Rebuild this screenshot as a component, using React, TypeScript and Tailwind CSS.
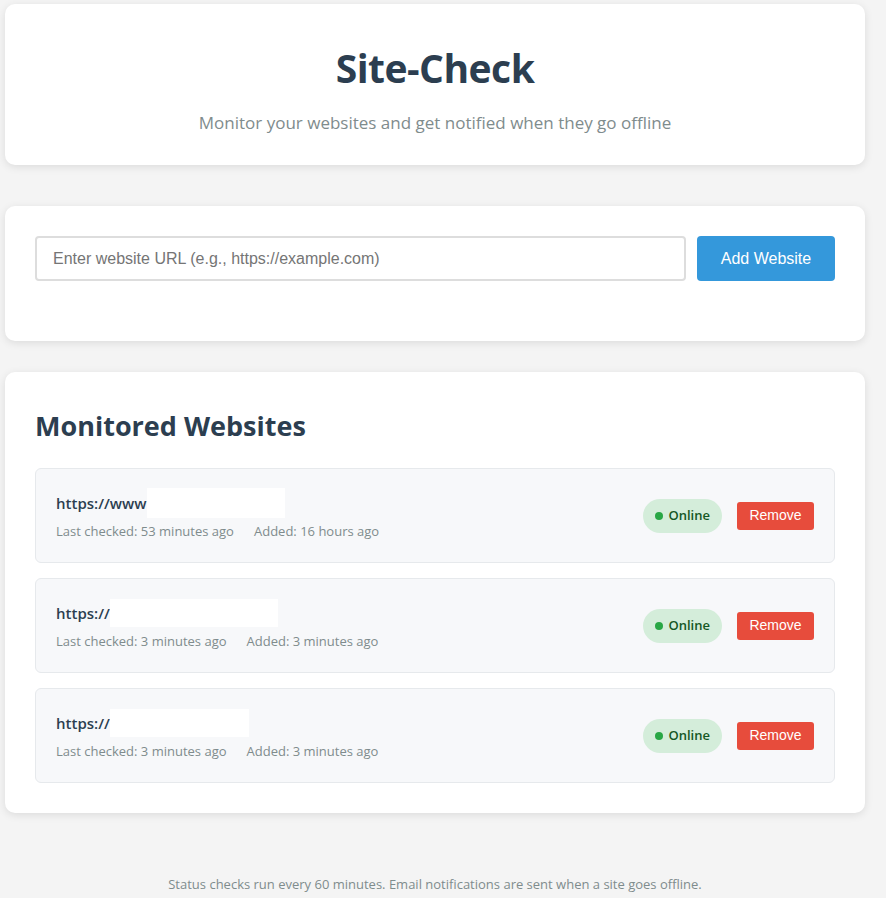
const sites = [
  { prefix: "https://www", hide: "w-[138px] h-[30px]", checked: "53 minutes ago", added: "16 hours ago" },
  { prefix: "https://", hide: "w-[168px] h-[28px]", checked: "3 minutes ago", added: "3 minutes ago" },
  { prefix: "https://", hide: "w-[139px] h-[28px]", checked: "3 minutes ago", added: "3 minutes ago" },
];

const App = () => {
  return (
    <div className="min-h-[898px] bg-[#f4f4f4] pl-[5px] pr-[21px] pt-[4px] font-['Open_Sans','Noto_Sans',sans-serif] text-[#2c3e50]">
      {/* header card */}
      <header className="bg-white rounded-[10px] shadow-[0_2px_8px_rgba(0,0,0,0.1)] h-[161px] flex flex-col items-center pt-[40px]">
        <h1 className="text-[39px] font-bold leading-[48px] tracking-[-0.5px]">Site-Check</h1>
        <p className="mt-[19px] text-[17px] text-[#7f8c8d] leading-[24px]">
          Monitor your websites and get notified when they go offline
        </p>
      </header>

      {/* add form */}
      <section className="mt-[41px] bg-white rounded-[10px] shadow-[0_2px_8px_rgba(0,0,0,0.1)] p-[30px] pb-[60px]">
        <div className="flex gap-[11px]">
          <input
            placeholder="Enter website URL (e.g., https://example.com)"
            className="flex-1 h-[45px] border-2 border-[#dddddd] rounded-[4px] px-[16px] text-[16px] font-['Liberation_Sans',Arial,sans-serif] placeholder:text-[#757575] outline-none"
          />
          <button className="w-[138px] h-[45px] bg-[#3498db] text-white rounded-[4px] text-[16px] font-['Liberation_Sans',Arial,sans-serif]">
            Add Website
          </button>
        </div>
      </section>

      {/* monitored list */}
      <section className="mt-[31px] bg-white rounded-[10px] shadow-[0_2px_8px_rgba(0,0,0,0.1)] px-[30px] pt-[36px] pb-[30px]">
        <h2 className="text-[27px] font-bold leading-[36px] mb-[24px]">Monitored Websites</h2>
        <div className="flex flex-col gap-[15px]">
          {sites.map((site, i) => (
            <div
              key={i}
              className="h-[95px] bg-[#f7f8fa] border border-[#e6e9ec] rounded-[6px] pl-[20px] pr-[20px] flex items-center justify-between"
            >
              <div>
                <div className="flex items-center h-[22px] text-[15px] font-semibold leading-[22px]">
                  <span>{site.prefix}</span>
                  <span className={`inline-block bg-white ${site.hide}`}></span>
                </div>
                <div className="mt-[8px] flex gap-[20px] text-[13px] text-[#7f8c8d] leading-[18px]">
                  <span>Last checked: {site.checked}</span>
                  <span>Added: {site.added}</span>
                </div>
              </div>
              <div className="flex items-center gap-[15px]">
                <span className="h-[34px] px-[12px] rounded-full bg-[#d4edda] text-[#155724] text-[13px] font-semibold flex items-center gap-[6px]">
                  <span className="w-[8px] h-[8px] rounded-full bg-[#28a745]"></span>
                  Online
                </span>
                <button className="w-[77px] h-[28px] bg-[#e74c3c] text-white text-[14px] rounded-[3px] font-['Liberation_Sans',Arial,sans-serif]">
                  Remove
                </button>
              </div>
            </div>
          ))}
        </div>
      </section>

      <footer className="mt-[62px] text-center text-[13px] text-[#7f8c8d] leading-[18px]">
        Status checks run every 60 minutes. Email notifications are sent when a site goes offline.
      </footer>
    </div>
  );
};

export default App;
